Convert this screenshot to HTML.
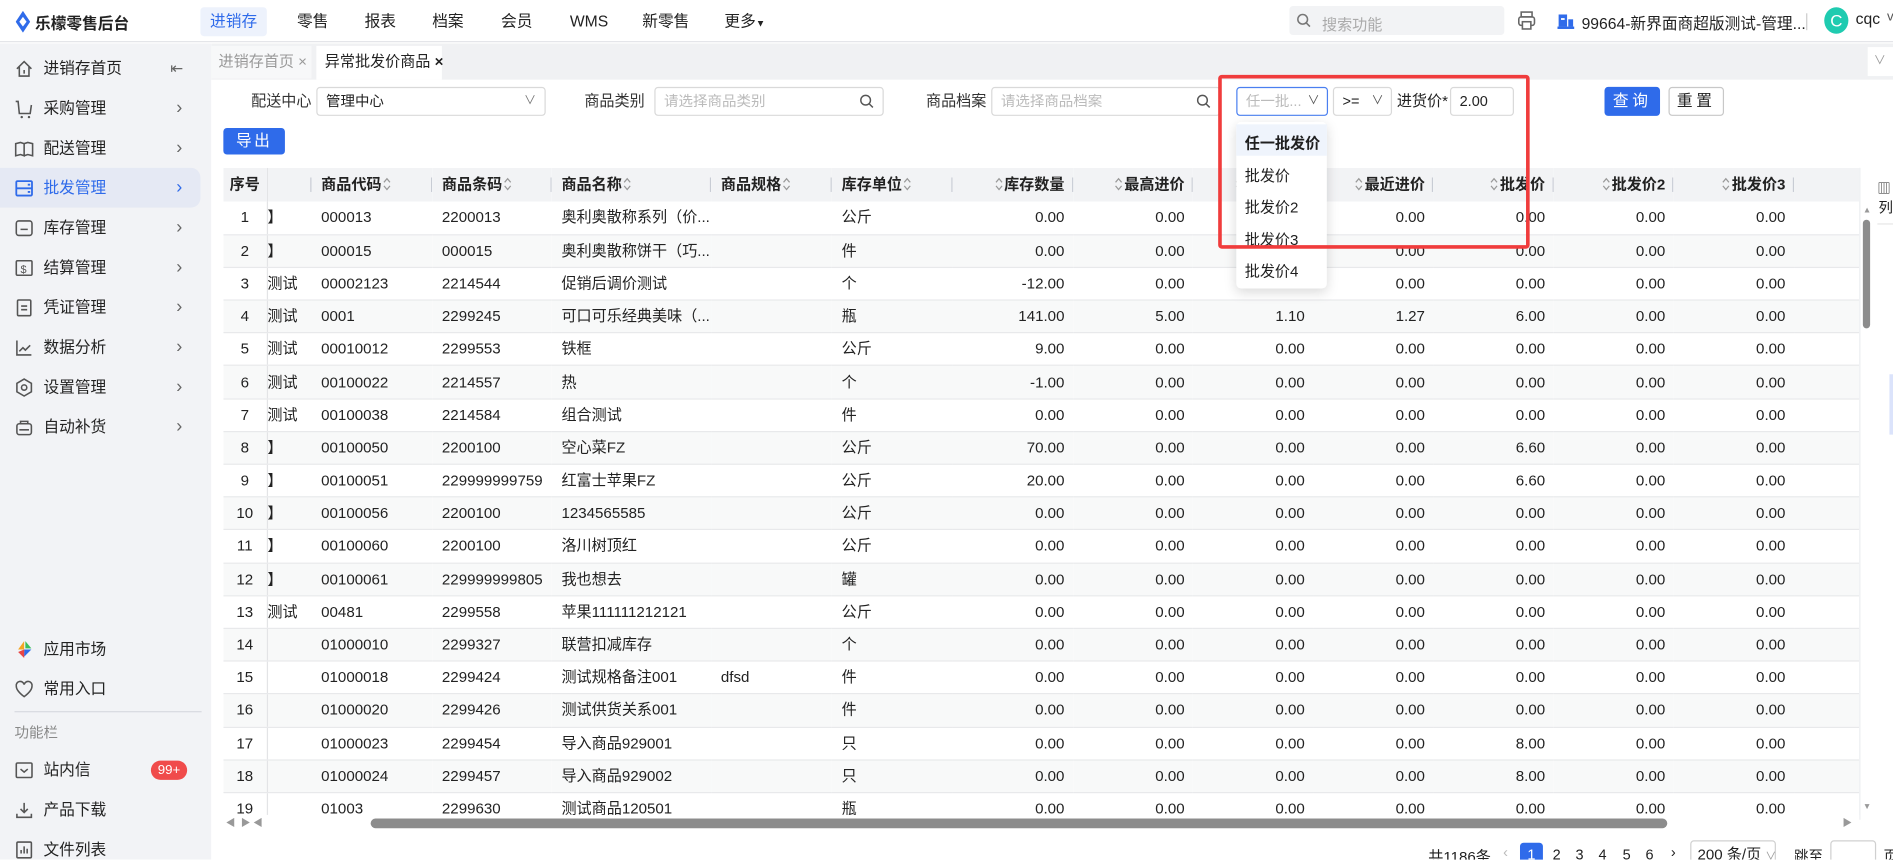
<!DOCTYPE html>
<html><head><meta charset="utf-8">
<style>
*{box-sizing:border-box;margin:0;padding:0}
html,body{width:1893px;height:860px;overflow:hidden;background:#fff}
body{font-family:"Liberation Sans","Noto Sans CJK SC",sans-serif;color:#1f1f1f}
#root{position:absolute;left:0;top:0;width:1568px;height:712px;transform:scale(1.2073);transform-origin:0 0;overflow:hidden;font-size:12px}
.a{position:absolute;white-space:nowrap}
.top{position:absolute;left:0;top:0;width:1568px;height:35px;background:#fff;border-bottom:1px solid #e3e4e8}
.nav{position:absolute;top:6px;height:24px;line-height:24px;font-size:13px;color:#222}
.side{position:absolute;left:0;top:36px;width:175px;height:676px;background:#f2f3f6}
.si{position:absolute;left:0;width:166px;height:33px;line-height:33px;font-size:13px;color:#222}
.si .ic{position:absolute;left:12px;top:9px;width:16px;height:16px}
.si .t{position:absolute;left:36px;top:0;line-height:33px}
.si .ch{position:absolute;left:146px;top:0;line-height:33px;color:#666;font-size:15px}
.main{position:absolute;left:175px;top:36px;width:1393px;height:676px;background:#fff}
.inp{position:absolute;height:24px;border:1px solid #d9d9d9;border-radius:3px;background:#fff;font-size:12px;line-height:22px;padding-left:7px}
.lbl{position:absolute;font-size:12.5px;line-height:24px;color:#333}
.tbl{position:absolute;left:185px;top:139px;width:1355px;height:538px;overflow:hidden}
table{border-collapse:collapse;table-layout:fixed;font-size:12.5px}
th{height:28px;line-height:14px;background:#f2f3f5;font-weight:bold;color:#222;text-align:left;padding:0 0 0 8px;position:relative;white-space:nowrap;overflow:hidden;vertical-align:middle}
th.r{text-align:right;padding:0 7px 0 0}
th:after{content:"";position:absolute;right:0;top:8px;height:12px;border-right:1px solid #c8ccd4}
th.n:after{display:none}
td{height:27.2px;line-height:14px;padding:0 0 0 8px;white-space:nowrap;overflow:hidden;border-bottom:1px solid #e8e9eb;color:#222;vertical-align:middle}
td.r{text-align:right;padding:0 7px 0 0}
td.c,th.c{text-align:center;padding:0}
tr:nth-child(odd) td{background:#f8f9f9}
.s{display:inline-block;width:7px;height:11px;vertical-align:-1px;margin:0 1px}
td.h{color:#222;padding-left:0;border-left:1px solid #e3e4e6}
</style></head><body><div id="root">

<div class="top">
  <svg class="a" style="left:13px;top:9px" width="12" height="18" viewBox="0 0 12 18"><path d="M6 0 L12 9 L6 18 L0 9Z" fill="#2f6bea"/><path d="M6 5 L9 9 L6 13 L3 9Z" fill="#fff"/></svg>
  <div class="a" style="left:29px;top:9px;font-size:13px;font-weight:bold;color:#222">乐檬零售后台</div>
  <div class="nav" style="left:166px;width:55px;background:#edf2fc;color:#2f6bea;border-radius:3px;text-align:center">进销存</div>
  <div class="nav" style="left:246px">零售</div>
  <div class="nav" style="left:302px">报表</div>
  <div class="nav" style="left:358px">档案</div>
  <div class="nav" style="left:415px">会员</div>
  <div class="nav" style="left:472px">WMS</div>
  <div class="nav" style="left:532px">新零售</div>
  <div class="nav" style="left:600px">更多<span style="font-size:8px">▼</span></div>
  <div class="a" style="left:1068px;top:5px;width:178px;height:24px;background:#f2f3f5;border-radius:3px"></div>
  <svg class="a" style="left:1074px;top:11px" width="12" height="12" viewBox="0 0 12 12"><circle cx="5" cy="5" r="4" fill="none" stroke="#777" stroke-width="1.3"/><path d="M8 8l3 3" stroke="#777" stroke-width="1.3"/></svg>
  <div class="a" style="left:1095px;top:10px;font-size:12.5px;color:#aaa">搜索功能</div>
  <svg class="a" style="left:1257px;top:9px" width="15" height="16" viewBox="0 0 15 16"><rect x="3" y="1" width="9" height="4" fill="none" stroke="#666" stroke-width="1.3"/><rect x="1" y="5" width="13" height="7" rx="2" fill="none" stroke="#666" stroke-width="1.3"/><rect x="4" y="9" width="7" height="6" fill="#fff" stroke="#666" stroke-width="1.3"/></svg>
  <svg class="a" style="left:1290px;top:11px" width="14" height="13" viewBox="0 0 14 13"><rect x="1" y="1" width="7" height="10" fill="#2f6bea"/><rect x="9" y="5" width="4" height="6" fill="#2f6bea"/><rect x="0" y="11" width="14" height="2" fill="#2f6bea"/><rect x="3" y="4" width="3" height="1.5" fill="#fff"/></svg>
  <div class="a" style="left:1310px;top:9px;font-size:13px;color:#222">99664-新界面商超版测试-管理...</div>
  <div class="a" style="left:1496px;top:11px;width:1px;height:14px;background:#ccc"></div>
  <div class="a" style="left:1511px;top:6px;width:20px;height:22px;border-radius:50%;background:#1fcbb0;color:#fff;font-size:14px;text-align:center;line-height:22px">C</div>
  <div class="a" style="left:1537px;top:8px;font-size:13px">cqc</div>
  <div class="a" style="left:1563px;top:8px;font-size:11px;color:#555">v</div>
</div>

<div class="side">
  <div class="si" style="top:4px"><svg class="ic" viewBox="0 0 16 16"><path d="M2 8L8 2l6 6M4 6.5V14h8V6.5M8 9v3" fill="none" stroke="#555" stroke-width="1.3"/></svg><span class="t">进销存首页</span><span class="a" style="left:141px;top:0;line-height:33px;color:#666">⇤</span></div>
  <div class="si" style="top:37px"><svg class="ic" viewBox="0 0 16 16"><path d="M1 2h2l1 10h9l1-7" fill="none" stroke="#555" stroke-width="1.3"/><circle cx="6" cy="15" r="1" fill="#555"/><circle cx="12" cy="15" r="1" fill="#555"/></svg><span class="t">采购管理</span><span class="ch">›</span></div>
  <div class="si" style="top:70px"><svg class="ic" viewBox="0 0 16 16"><path d="M1 4l4-1 3 1v10l-3-1-4 1zM8 4l3-1 4 1v10l-4-1-3 1" fill="none" stroke="#555" stroke-width="1.3"/></svg><span class="t">配送管理</span><span class="ch">›</span></div>
  <div class="si" style="top:103px;background:#e5e9f4;border-radius:0 8px 8px 0;color:#2f6bea"><svg class="ic" viewBox="0 0 16 16"><rect x="1.5" y="2" width="13" height="12" rx="1" fill="none" stroke="#2f6bea" stroke-width="1.5"/><path d="M1.5 8h13M11 5h2M11 11h2" stroke="#2f6bea" stroke-width="1.5"/></svg><span class="t">批发管理</span><span class="ch" style="color:#2f6bea">›</span></div>
  <div class="si" style="top:136px"><svg class="ic" viewBox="0 0 16 16"><rect x="1.5" y="2" width="13" height="12" rx="2" fill="none" stroke="#555" stroke-width="1.3"/><path d="M5 9h6" stroke="#555" stroke-width="1.3"/></svg><span class="t">库存管理</span><span class="ch">›</span></div>
  <div class="si" style="top:169px"><svg class="ic" viewBox="0 0 16 16"><rect x="1.5" y="2" width="13" height="12" rx="1" fill="none" stroke="#555" stroke-width="1.3"/><text x="5" y="12" font-size="9" fill="#555">$</text></svg><span class="t">结算管理</span><span class="ch">›</span></div>
  <div class="si" style="top:202px"><svg class="ic" viewBox="0 0 16 16"><rect x="2.5" y="1.5" width="11" height="13" rx="1" fill="none" stroke="#555" stroke-width="1.3"/><path d="M5.5 6.5h5M5.5 9.5h5" stroke="#555" stroke-width="1.3"/></svg><span class="t">凭证管理</span><span class="ch">›</span></div>
  <div class="si" style="top:235px"><svg class="ic" viewBox="0 0 16 16"><path d="M2 2v12h12M4 11l3-3 2 2 4-4" fill="none" stroke="#555" stroke-width="1.3"/></svg><span class="t">数据分析</span><span class="ch">›</span></div>
  <div class="si" style="top:268px"><svg class="ic" viewBox="0 0 16 16"><path d="M8 1l6 3.5v7L8 15l-6-3.5v-7z" fill="none" stroke="#555" stroke-width="1.3"/><circle cx="8" cy="8" r="2.2" fill="none" stroke="#555" stroke-width="1.3"/></svg><span class="t">设置管理</span><span class="ch">›</span></div>
  <div class="si" style="top:301px"><svg class="ic" viewBox="0 0 16 16"><rect x="2" y="5" width="12" height="9" rx="2" fill="none" stroke="#555" stroke-width="1.3"/><path d="M5 5V3h6v2M4 10h8" stroke="#555" stroke-width="1.3" fill="none"/></svg><span class="t">自动补货</span><span class="ch">›</span></div>

  <div class="si" style="top:485px"><svg class="ic" viewBox="0 0 16 16"><path d="M8 1v7H3z" fill="#f5a623"/><path d="M8 8h6l-6 6z" fill="#2f6bea"/><path d="M8 8v7l-5-5z" fill="#e84545"/><path d="M9 1l5 6H9z" fill="#3cbf5b"/></svg><span class="t">应用市场</span></div>
  <div class="si" style="top:518px"><svg class="ic" viewBox="0 0 16 16"><path d="M8 14S1.5 9.5 1.5 5.5A3.2 3.2 0 0 1 8 4a3.2 3.2 0 0 1 6.5 1.5C14.5 9.5 8 14 8 14z" fill="none" stroke="#555" stroke-width="1.3"/></svg><span class="t">常用入口</span></div>
  <div class="a" style="left:12px;top:553px;width:155px;height:1px;background:#d8dae0"></div>
  <div class="a" style="left:12px;top:562px;color:#888;font-size:12px">功能栏</div>
  <div class="si" style="top:585px"><svg class="ic" viewBox="0 0 16 16"><rect x="1.5" y="2" width="13" height="12" rx="1" fill="none" stroke="#555" stroke-width="1.3"/><path d="M5 7l3 2.5L11 7" fill="none" stroke="#555" stroke-width="1.3"/></svg><span class="t">站内信</span><span class="a" style="left:125px;top:9px;width:30px;height:16px;line-height:16px;border-radius:8px;background:#f04b4b;color:#fff;font-size:11px;text-align:center">99+</span></div>
  <div class="si" style="top:618px"><svg class="ic" viewBox="0 0 16 16"><path d="M8 2v8M5 7l3 3 3-3M2 11v3h12v-3" fill="none" stroke="#555" stroke-width="1.3"/></svg><span class="t">产品下载</span></div>
  <div class="si" style="top:651px"><svg class="ic" viewBox="0 0 16 16"><rect x="2" y="1.5" width="12" height="13" rx="1" fill="none" stroke="#555" stroke-width="1.3"/><path d="M5.5 11V8M8 11V5M10.5 11V7" stroke="#555" stroke-width="1.3"/></svg><span class="t">文件列表</span></div>
</div>

<div class="main">
  <div class="a" style="left:0;top:0;width:1393px;height:30px;background:#f0f1f3"></div>
  <div class="a" style="left:0;top:2px;width:83px;height:27px;line-height:27px;font-size:12.5px;color:#999;padding-left:6px;background:#f7f8f9">进销存首页 ×</div>
  <div class="a" style="left:87px;top:2px;width:104px;height:28px;line-height:27px;font-size:12.5px;color:#222;padding-left:7px;background:#fff">异常批发价商品 <b>×</b></div>
  <div class="a" style="left:1372px;top:3px;width:21px;height:24px;background:#fff;color:#999;font-size:10px;line-height:24px;padding-left:5px">∨</div>
</div>

<div class="lbl" style="left:208px;top:72px">配送中心</div>
<div class="inp" style="left:262px;top:72px;width:190px;color:#222">管理中心<span class="a" style="right:7px;top:0;color:#777;font-size:10px">∨</span></div>
<div class="lbl" style="left:484px;top:72px">商品类别</div>
<div class="inp" style="left:542px;top:72px;width:190px;color:#bbb">请选择商品类别<svg class="a" style="right:7px;top:5px" width="12" height="12" viewBox="0 0 12 12"><circle cx="5" cy="5" r="4" fill="none" stroke="#555" stroke-width="1.2"/><path d="M8 8l3 3" stroke="#555" stroke-width="1.2"/></svg></div>
<div class="lbl" style="left:767px;top:72px">商品档案</div>
<div class="inp" style="left:821px;top:72px;width:190px;color:#bbb">请选择商品档案<svg class="a" style="right:7px;top:5px" width="12" height="12" viewBox="0 0 12 12"><circle cx="5" cy="5" r="4" fill="none" stroke="#555" stroke-width="1.2"/><path d="M8 8l3 3" stroke="#555" stroke-width="1.2"/></svg></div>
<div class="inp" style="left:1024px;top:72px;width:76px;color:#bbb;border-color:#4a7ff0">任一批...<span class="a" style="right:6px;top:0;color:#555;font-size:10px">∨</span></div>
<div class="inp" style="left:1104px;top:72px;width:49px;color:#222">&gt;=<span class="a" style="right:6px;top:0;color:#555;font-size:10px">∨</span></div>
<div class="lbl" style="left:1157px;top:72px;color:#222">进货价*</div>
<div class="inp" style="left:1201px;top:72px;width:53px;color:#222">2.00</div>
<div class="a" style="left:1329px;top:72px;width:46px;height:24px;line-height:24px;background:#2f6bea;border-radius:3px;color:#fff;text-align:center;font-size:13px;letter-spacing:3px">查询</div>
<div class="a" style="left:1382px;top:72px;width:46px;height:24px;line-height:22px;border:1px solid #c8c8c8;border-radius:3px;color:#222;text-align:center;font-size:13px;letter-spacing:3px">重置</div>
<div class="a" style="left:185px;top:106px;width:51px;height:22px;line-height:22px;background:#2f6bea;border-radius:3px;color:#fff;text-align:center;font-size:13px;letter-spacing:2px">导出</div>

<div class="tbl">
<table style="width:1430px">
<colgroup><col style="width:36px"><col style="width:37px"><col style="width:100px"><col style="width:99px"><col style="width:132px"><col style="width:100px"><col style="width:100px"><col style="width:99.5px"><col style="width:99.5px"><col style="width:99.5px"><col style="width:99.5px"><col style="width:99.5px"><col style="width:99.5px"><col style="width:99.5px"><col style="width:129px"></colgroup>
<tr><th class="c n">序号</th><th style="border-left:1px solid #e3e4e6"></th><th>商品代码<svg class="s" viewBox="0 0 7 11"><path d="M1 4l2.5-3L6 4M1 7l2.5 3L6 7" fill="none" stroke="#999"/></svg></th><th>商品条码<svg class="s" viewBox="0 0 7 11"><path d="M1 4l2.5-3L6 4M1 7l2.5 3L6 7" fill="none" stroke="#999"/></svg></th><th>商品名称<svg class="s" viewBox="0 0 7 11"><path d="M1 4l2.5-3L6 4M1 7l2.5 3L6 7" fill="none" stroke="#999"/></svg></th><th>商品规格<svg class="s" viewBox="0 0 7 11"><path d="M1 4l2.5-3L6 4M1 7l2.5 3L6 7" fill="none" stroke="#999"/></svg></th><th>库存单位<svg class="s" viewBox="0 0 7 11"><path d="M1 4l2.5-3L6 4M1 7l2.5 3L6 7" fill="none" stroke="#999"/></svg></th><th class="r"><svg class="s" viewBox="0 0 7 11"><path d="M1 4l2.5-3L6 4M1 7l2.5 3L6 7" fill="none" stroke="#999"/></svg>库存数量</th><th class="r"><svg class="s" viewBox="0 0 7 11"><path d="M1 4l2.5-3L6 4M1 7l2.5 3L6 7" fill="none" stroke="#999"/></svg>最高进价</th><th class="r"><svg class="s" viewBox="0 0 7 11"><path d="M1 4l2.5-3L6 4M1 7l2.5 3L6 7" fill="none" stroke="#999"/></svg>最低进价</th><th class="r"><svg class="s" viewBox="0 0 7 11"><path d="M1 4l2.5-3L6 4M1 7l2.5 3L6 7" fill="none" stroke="#999"/></svg>最近进价</th><th class="r"><svg class="s" viewBox="0 0 7 11"><path d="M1 4l2.5-3L6 4M1 7l2.5 3L6 7" fill="none" stroke="#999"/></svg>批发价</th><th class="r"><svg class="s" viewBox="0 0 7 11"><path d="M1 4l2.5-3L6 4M1 7l2.5 3L6 7" fill="none" stroke="#999"/></svg>批发价2</th><th class="r"><svg class="s" viewBox="0 0 7 11"><path d="M1 4l2.5-3L6 4M1 7l2.5 3L6 7" fill="none" stroke="#999"/></svg>批发价3</th><th class="r"><svg class="s" viewBox="0 0 7 11"><path d="M1 4l2.5-3L6 4M1 7l2.5 3L6 7" fill="none" stroke="#999"/></svg>批发价4</th></tr>
<tr><td class="c">1</td><td class="h">】</td><td>000013</td><td>2200013</td><td>奥利奥散称系列（价...</td><td></td><td>公斤</td><td class="r">0.00</td><td class="r">0.00</td><td class="r">0.00</td><td class="r">0.00</td><td class="r">0.00</td><td class="r">0.00</td><td class="r">0.00</td><td></td></tr>
<tr><td class="c">2</td><td class="h">】</td><td>000015</td><td>000015</td><td>奥利奥散称饼干（巧...</td><td></td><td>件</td><td class="r">0.00</td><td class="r">0.00</td><td class="r">0.00</td><td class="r">0.00</td><td class="r">0.00</td><td class="r">0.00</td><td class="r">0.00</td><td></td></tr>
<tr><td class="c">3</td><td class="h">测试</td><td>00002123</td><td>2214544</td><td>促销后调价测试</td><td></td><td>个</td><td class="r">-12.00</td><td class="r">0.00</td><td class="r">0.00</td><td class="r">0.00</td><td class="r">0.00</td><td class="r">0.00</td><td class="r">0.00</td><td></td></tr>
<tr><td class="c">4</td><td class="h">测试</td><td>0001</td><td>2299245</td><td>可口可乐经典美味（...</td><td></td><td>瓶</td><td class="r">141.00</td><td class="r">5.00</td><td class="r">1.10</td><td class="r">1.27</td><td class="r">6.00</td><td class="r">0.00</td><td class="r">0.00</td><td></td></tr>
<tr><td class="c">5</td><td class="h">测试</td><td>00010012</td><td>2299553</td><td>铁框</td><td></td><td>公斤</td><td class="r">9.00</td><td class="r">0.00</td><td class="r">0.00</td><td class="r">0.00</td><td class="r">0.00</td><td class="r">0.00</td><td class="r">0.00</td><td></td></tr>
<tr><td class="c">6</td><td class="h">测试</td><td>00100022</td><td>2214557</td><td>热</td><td></td><td>个</td><td class="r">-1.00</td><td class="r">0.00</td><td class="r">0.00</td><td class="r">0.00</td><td class="r">0.00</td><td class="r">0.00</td><td class="r">0.00</td><td></td></tr>
<tr><td class="c">7</td><td class="h">测试</td><td>00100038</td><td>2214584</td><td>组合测试</td><td></td><td>件</td><td class="r">0.00</td><td class="r">0.00</td><td class="r">0.00</td><td class="r">0.00</td><td class="r">0.00</td><td class="r">0.00</td><td class="r">0.00</td><td></td></tr>
<tr><td class="c">8</td><td class="h">】</td><td>00100050</td><td>2200100</td><td>空心菜FZ</td><td></td><td>公斤</td><td class="r">70.00</td><td class="r">0.00</td><td class="r">0.00</td><td class="r">0.00</td><td class="r">6.60</td><td class="r">0.00</td><td class="r">0.00</td><td></td></tr>
<tr><td class="c">9</td><td class="h">】</td><td>00100051</td><td>229999999759</td><td>红富士苹果FZ</td><td></td><td>公斤</td><td class="r">20.00</td><td class="r">0.00</td><td class="r">0.00</td><td class="r">0.00</td><td class="r">6.60</td><td class="r">0.00</td><td class="r">0.00</td><td></td></tr>
<tr><td class="c">10</td><td class="h">】</td><td>00100056</td><td>2200100</td><td>1234565585</td><td></td><td>公斤</td><td class="r">0.00</td><td class="r">0.00</td><td class="r">0.00</td><td class="r">0.00</td><td class="r">0.00</td><td class="r">0.00</td><td class="r">0.00</td><td></td></tr>
<tr><td class="c">11</td><td class="h">】</td><td>00100060</td><td>2200100</td><td>洛川树顶红</td><td></td><td>公斤</td><td class="r">0.00</td><td class="r">0.00</td><td class="r">0.00</td><td class="r">0.00</td><td class="r">0.00</td><td class="r">0.00</td><td class="r">0.00</td><td></td></tr>
<tr><td class="c">12</td><td class="h">】</td><td>00100061</td><td>229999999805</td><td>我也想去</td><td></td><td>罐</td><td class="r">0.00</td><td class="r">0.00</td><td class="r">0.00</td><td class="r">0.00</td><td class="r">0.00</td><td class="r">0.00</td><td class="r">0.00</td><td></td></tr>
<tr><td class="c">13</td><td class="h">测试</td><td>00481</td><td>2299558</td><td>苹果111111212121</td><td></td><td>公斤</td><td class="r">0.00</td><td class="r">0.00</td><td class="r">0.00</td><td class="r">0.00</td><td class="r">0.00</td><td class="r">0.00</td><td class="r">0.00</td><td></td></tr>
<tr><td class="c">14</td><td class="h"></td><td>01000010</td><td>2299327</td><td>联营扣减库存</td><td></td><td>个</td><td class="r">0.00</td><td class="r">0.00</td><td class="r">0.00</td><td class="r">0.00</td><td class="r">0.00</td><td class="r">0.00</td><td class="r">0.00</td><td></td></tr>
<tr><td class="c">15</td><td class="h"></td><td>01000018</td><td>2299424</td><td>测试规格备注001</td><td>dfsd</td><td>件</td><td class="r">0.00</td><td class="r">0.00</td><td class="r">0.00</td><td class="r">0.00</td><td class="r">0.00</td><td class="r">0.00</td><td class="r">0.00</td><td></td></tr>
<tr><td class="c">16</td><td class="h"></td><td>01000020</td><td>2299426</td><td>测试供货关系001</td><td></td><td>件</td><td class="r">0.00</td><td class="r">0.00</td><td class="r">0.00</td><td class="r">0.00</td><td class="r">0.00</td><td class="r">0.00</td><td class="r">0.00</td><td></td></tr>
<tr><td class="c">17</td><td class="h"></td><td>01000023</td><td>2299454</td><td>导入商品929001</td><td></td><td>只</td><td class="r">0.00</td><td class="r">0.00</td><td class="r">0.00</td><td class="r">0.00</td><td class="r">8.00</td><td class="r">0.00</td><td class="r">0.00</td><td></td></tr>
<tr><td class="c">18</td><td class="h"></td><td>01000024</td><td>2299457</td><td>导入商品929002</td><td></td><td>只</td><td class="r">0.00</td><td class="r">0.00</td><td class="r">0.00</td><td class="r">0.00</td><td class="r">8.00</td><td class="r">0.00</td><td class="r">0.00</td><td></td></tr>
<tr><td class="c">19</td><td class="h"></td><td>01003</td><td>2299630</td><td>测试商品120501</td><td></td><td>瓶</td><td class="r">0.00</td><td class="r">0.00</td><td class="r">0.00</td><td class="r">0.00</td><td class="r">0.00</td><td class="r">0.00</td><td class="r">0.00</td><td></td></tr>
</table>
</div>

<div class="a" style="left:1540px;top:139px;width:28px;height:540px;background:#fff;border-left:1px solid #eceef1"></div>
<div class="a" style="left:1555px;top:148px;font-size:11px">▥</div>
<div class="a" style="left:1556px;top:163px;font-size:12px">列</div>
<div class="a" style="left:1555px;top:185px;width:13px;height:1px;background:#e6e6e6"></div>
<div class="a" style="left:1565px;top:310px;width:3px;height:50px;background:#dbe3fb"></div>
<div class="a" style="left:1542px;top:168px;width:10px;height:508px;background:#fff"></div>
<div class="a" style="left:1543px;top:171px;font-size:7px;color:#999">▲</div>
<div class="a" style="left:1543px;top:182px;width:6px;height:90px;border-radius:3px;background:#8c8c8c"></div>
<div class="a" style="left:1543px;top:665px;font-size:7px;color:#999">▼</div>
<div class="a" style="left:185px;top:675px;width:1355px;height:15px;background:#fff"></div>
<div class="a" style="left:187px;top:676px;font-size:8px;color:#999">◀ &nbsp;▶ ◀</div>
<div class="a" style="left:307px;top:678px;width:1074px;height:8px;border-radius:4px;background:#8c8c8c"></div>
<div class="a" style="left:1526px;top:676px;font-size:8px;color:#999">▶</div>

<div class="a" style="left:1183px;top:699px;font-size:12.5px">共1186条</div>
<div class="a" style="left:1245px;top:699px;color:#bbb;font-size:12px">‹</div>
<div class="a" style="left:1259px;top:698px;width:19px;height:20px;background:#2f6bea;border-radius:3px;color:#fff;text-align:center;line-height:20px;font-size:12px">1</div>
<div class="a" style="left:1286px;top:701px;font-size:12px">2</div>
<div class="a" style="left:1305px;top:701px;font-size:12px">3</div>
<div class="a" style="left:1324px;top:701px;font-size:12px">4</div>
<div class="a" style="left:1344px;top:701px;font-size:12px">5</div>
<div class="a" style="left:1363px;top:701px;font-size:12px">6</div>
<div class="a" style="left:1384px;top:699px;font-size:12px">›</div>
<div class="a" style="left:1400px;top:696px;width:71px;height:24px;border:1px solid #d0d0d0;border-radius:3px;font-size:12.5px;padding-left:5px;line-height:22px">200 条/页 <span style="color:#999;font-size:9px">∨</span></div>
<div class="a" style="left:1486px;top:700px;font-size:12px">跳至</div>
<div class="a" style="left:1516px;top:696px;width:38px;height:24px;border:1px solid #d0d0d0;border-radius:3px"></div>
<div class="a" style="left:1560px;top:700px;font-size:12px">页</div>

<div class="a" style="left:1024px;top:101px;width:75px;height:138px;background:#fff;border-radius:4px;box-shadow:0 3px 10px rgba(0,0,0,.15)"></div>
<div class="a" style="left:1024px;top:103px;width:75px;height:26px;background:#eff4fc"></div>
<div class="a" style="left:1031px;top:108px;font-size:12.5px;font-weight:bold">任一批发价</div>
<div class="a" style="left:1031px;top:135px;font-size:12.5px">批发价</div>
<div class="a" style="left:1031px;top:161px;font-size:12.5px">批发价2</div>
<div class="a" style="left:1031px;top:188px;font-size:12.5px">批发价3</div>
<div class="a" style="left:1031px;top:214px;font-size:12.5px">批发价4</div>
<div class="a" style="left:1009px;top:62px;width:258px;height:144px;border:3px solid #f03c3c;border-radius:3px"></div>

</div></body></html>
